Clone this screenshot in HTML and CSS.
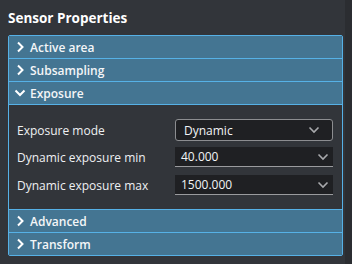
FILE: index.html
```html
<!DOCTYPE html>
<html>
<head>
<meta charset="utf-8">
<link rel="stylesheet" href="styles.css">
</head>
<body>
<div class="window">
  <h1 class="title">Sensor Properties</h1>
  <div class="panel">
    <div class="hdr"><svg class="chev" viewBox="0 0 8 12"><path d="M2 1.5l4.5 4.5-4.5 4.5"/></svg>Active area</div>
    <div class="hdr"><svg class="chev" viewBox="0 0 8 12"><path d="M2 1.5l4.5 4.5-4.5 4.5"/></svg>Subsampling</div>
    <div class="hdr"><svg class="chev open" viewBox="0 0 12 12"><path d="M1.5 3.5l4.5 4.5 4.5-4.5"/></svg>Exposure</div>
    <div class="content">
      <div class="row r1">
        <span class="label">Exposure mode</span>
        <div class="combo boxed"><span>Dynamic</span><svg class="dd" viewBox="0 0 12 8"><path d="M1.5 1.5l4.5 4.5 4.5-4.5"/></svg></div>
      </div>
      <div class="row r2">
        <span class="label">Dynamic exposure min</span>
        <div class="combo flat"><span>40.000</span><svg class="dd" viewBox="0 0 12 8"><path d="M1.5 1.5l4.5 4.5 4.5-4.5"/></svg></div>
      </div>
      <div class="row r3">
        <span class="label">Dynamic exposure max</span>
        <div class="combo flat"><span>1500.000</span><svg class="dd" viewBox="0 0 12 8"><path d="M1.5 1.5l4.5 4.5 4.5-4.5"/></svg></div>
      </div>
    </div>
    <div class="hdr sep"><svg class="chev" viewBox="0 0 8 12"><path d="M2 1.5l4.5 4.5-4.5 4.5"/></svg>Advanced</div>
    <div class="hdr last"><svg class="chev" viewBox="0 0 8 12"><path d="M2 1.5l4.5 4.5-4.5 4.5"/></svg>Transform</div>
  </div>
</div>
</body>
</html>
```
FILE: styles.css
```css
html, body {
  margin: 0;
  padding: 0;
  background: #2b2d31;
  width: 352px;
  height: 264px;
  overflow: hidden;
}
.window {
  width: 345px;
  height: 264px;
  background: #32353a;
  padding: 0 2px 0 8px;
  box-sizing: border-box;
  font-family: "Open Sans", sans-serif;
  color: #ffffff;
}
.title {
  margin: 0;
  height: 35px;
  line-height: 37px;
  font-size: 13.5px;
  font-weight: 700;
}
.panel {
  width: 335px;
  border: 1px solid #56b1e6;
  border-radius: 2px;
  box-sizing: border-box;
  overflow: hidden;
}
.hdr {
  height: 22px;
  background: #447592;
  border-bottom: 1px solid #56b1e6;
  display: flex;
  align-items: center;
  font-size: 12px;
  font-weight: 600;
  color: #f4f6f8;
  padding-left: 7px;
}
.hdr.sep { border-top: 1px solid #56b1e6; }
.hdr.last { border-bottom: none; }
.chev {
  width: 8px;
  height: 12px;
  margin-right: 6px;
  fill: none;
  stroke: #ffffff;
  stroke-width: 2;
}
.chev.open {
  width: 12px;
  margin-left: -2px;
  margin-right: 4px;
}
.content {
  padding: 14px 9px 14px 8px;
  display: flex;
  flex-direction: column;
}
.row {
  display: flex;
  align-items: center;
  justify-content: space-between;
  font-size: 12px;
  color: #eef0f2;
}
.r1 { height: 22px; }
.r2 { height: 20px; margin-top: 6px; }
.r3 { height: 20px; margin-top: 8px; }
.combo {
  width: 158px;
  height: 100%;
  box-sizing: border-box;
  background: #1f2023;
  display: flex;
  align-items: center;
  justify-content: space-between;
  color: #f2f4f6;
}
.combo.boxed {
  border: 1px solid #8c8d90;
  border-radius: 3px;
  padding: 0 12px 0 8px;
}
.combo.flat {
  border-bottom: 1px solid #9a9b9e;
  padding: 0 4px 0 6px;
}
.dd {
  width: 12px;
  height: 8px;
  fill: none;
  stroke: #a8a9ac;
  stroke-width: 1.6;
}
```
